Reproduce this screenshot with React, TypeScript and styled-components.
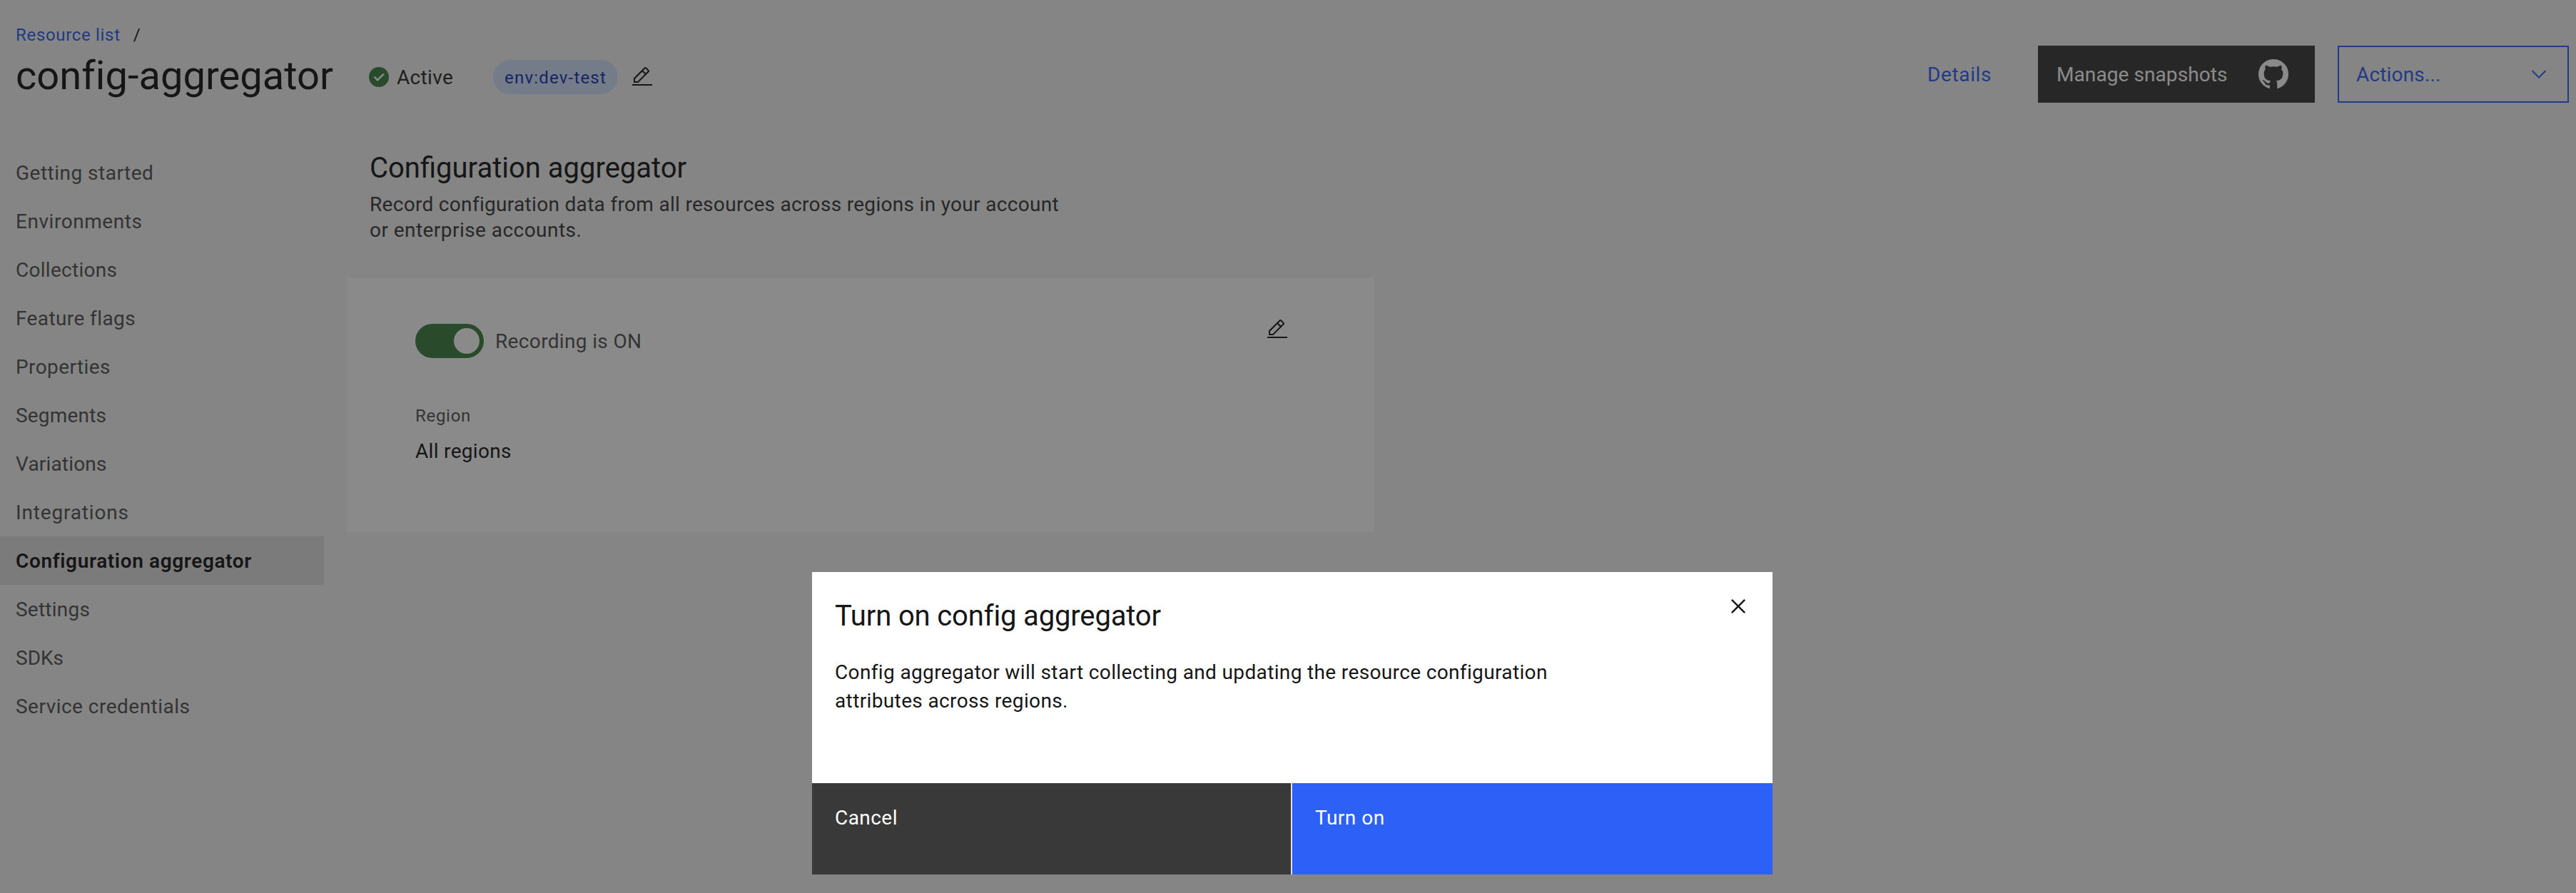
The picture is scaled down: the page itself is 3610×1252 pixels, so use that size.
import React from "react";
import styled, { createGlobalStyle } from "styled-components";

const color = {
  page: "#f4f4f4",
  layer: "#ffffff",
  selected: "#e0e0e0",
  text: "#161616",
  textStrong: "#393939",
  textSecondary: "#525252",
  blue: "#2d60f6",
  green: "#3e8040",
  dark: "#393939",
  tagBg: "#d3e1fd",
  tagText: "#1832b4",
};

const GlobalStyle = createGlobalStyle`
  *, *::before, *::after { box-sizing: border-box; }
  html, body { margin: 0; padding: 0; background: ${color.page}; overflow: hidden; }
  body { font-family: Roboto, "Noto Sans", sans-serif; font-size: 28px; color: ${color.text}; }
  h1, h2, p, ul { margin: 0; padding: 0; font-weight: 400; }
  button { font: inherit; border: 0; margin: 0; text-align: left; cursor: pointer; }
  svg { display: block; flex: none; }
`;

const Text = styled.span<{ $track?: number }>`
  letter-spacing: ${(p) => p.$track ?? 0.3}px;
  white-space: nowrap;
`;

const Page = styled.div`
  height: 1252px;
  background: ${color.page};
`;

const Header = styled.header`
  display: flex;
  justify-content: space-between;
  align-items: flex-start;
  height: 208px;
  padding: 33px 10px 0 22px;
`;

const Breadcrumb = styled.nav`
  display: flex;
  gap: 18px;
  font-size: 24px;
  line-height: 32px;
`;

const BreadcrumbLink = styled.a`
  color: ${color.blue};
`;

const TitleRow = styled.div`
  display: flex;
  align-items: center;
  height: 68px;
  margin-top: 9px;
`;

const Title = styled.h1`
  flex: 0 0 493px;
  padding-bottom: 4px;
  font-size: 56px;
  line-height: 64px;
`;

const Status = styled.div`
  display: flex;
  align-items: center;
  gap: 9px;
  width: 176px;
  line-height: 37px;
  color: #2b2b2b;
`;

const Tag = styled.span`
  width: 175px;
  height: 48px;
  margin-right: 18px;
  padding: 1px 0 0 16px;
  border-radius: 24px;
  background: ${color.tagBg};
  color: ${color.tagText};
  font-size: 24px;
  line-height: 48px;
`;

const HeaderActions = styled.div`
  display: flex;
  align-items: center;
  height: 80px;
  margin-top: 31px;
`;

const DetailsLink = styled.a`
  width: 156px;
  padding-left: 1px;
  color: ${color.blue};
`;

const HeaderButton = styled.button<{ $kind: "solid" | "outline" }>`
  display: flex;
  align-items: center;
  justify-content: space-between;
  height: 80px;
  width: ${(p) => (p.$kind === "solid" ? 388 : 324)}px;
  margin-left: ${(p) => (p.$kind === "solid" ? 0 : 32)}px;
  padding: ${(p) => (p.$kind === "solid" ? "0 34px 0 26px" : "0 24px 0 24px")};
  border: ${(p) => (p.$kind === "solid" ? "0" : `2px solid ${color.blue}`)};
  background: ${(p) => (p.$kind === "solid" ? color.dark : "transparent")};
  color: ${(p) => (p.$kind === "solid" ? "#ffffff" : color.blue)};
`;

const Body = styled.div`
  display: flex;
  align-items: flex-start;
  gap: 32px;
`;

const SideNav = styled.ul`
  width: 454px;
  list-style: none;
`;

const NavItem = styled.li<{ $active: boolean }>`
  height: 68px;
  padding: 1px 0 0 22px;
  line-height: 68px;
  font-weight: ${(p) => (p.$active ? 600 : 400)};
  color: ${(p) => (p.$active ? color.text : color.textSecondary)};
  background: ${(p) => (p.$active ? color.selected : "transparent")};
`;

const Main = styled.main`
  width: 1440px;
`;

const Intro = styled.section`
  padding: 2px 0 49px 32px;
`;

const Heading = styled.h2`
  font-size: 40px;
  line-height: 52px;
`;

const Description = styled.p`
  display: flex;
  flex-direction: column;
  margin-top: 7px;
  line-height: 36px;
  color: ${color.textStrong};
`;

const Card = styled.section`
  display: flex;
  justify-content: space-between;
  align-items: flex-start;
  height: 356px;
  padding: 56px 120px 0 96px;
  background: ${color.layer};
`;

const Fields = styled.div`
  display: flex;
  flex-direction: column;
  padding-top: 8px;
`;

const ToggleRow = styled.div`
  display: flex;
  align-items: center;
  gap: 16px;
  height: 48px;
  color: ${color.textSecondary};
`;

const Toggle = styled.span`
  display: flex;
  justify-content: flex-end;
  width: 96px;
  height: 48px;
  padding: 6px;
  border-radius: 24px;
  background: ${color.green};
`;

const Knob = styled.span`
  width: 36px;
  height: 36px;
  border-radius: 50%;
  background: #ffffff;
`;

const FieldLabel = styled.div`
  margin-top: 65px;
  font-size: 24px;
  line-height: 32px;
  color: ${color.textSecondary};
`;

const FieldValue = styled.div`
  margin-top: 14px;
  line-height: 40px;
`;

const Overlay = styled.div`
  position: fixed;
  inset: 0;
  display: flex;
  align-items: flex-start;
  padding: 802px 0 0 1138px;
  background: rgba(22, 22, 22, 0.5);
`;

const Dialog = styled.div`
  display: flex;
  flex-direction: column;
  width: 1346px;
  height: 424px;
  background: #ffffff;
`;

const DialogHeader = styled.div`
  display: flex;
  justify-content: space-between;
  align-items: flex-start;
  height: 88px;
  padding: 28px 28px 0 32px;
`;

const DialogTitle = styled.h2`
  padding-top: 8px;
  font-size: 40px;
  line-height: 52px;
`;

const DialogBody = styled.p`
  display: flex;
  flex: 1;
  flex-direction: column;
  padding: 33px 32px 0;
  line-height: 40px;
`;

const DialogFooter = styled.div`
  display: grid;
  grid-template-columns: 671px 673px;
  gap: 2px;
  height: 128px;
  background: #e0e0e0;
`;

const FooterButton = styled.button<{ $primary?: boolean }>`
  display: flex;
  align-items: flex-start;
  padding: 31px 32px 0;
  line-height: 36px;
  color: #ffffff;
  background: ${(p) => (p.$primary ? color.blue : color.dark)};
`;

const CheckIcon = () => (
  <svg width="32" height="32" viewBox="0 0 16 16" fill={color.green}>
    <path d="M8,1C4.1,1,1,4.1,1,8c0,3.9,3.1,7,7,7s7-3.1,7-7C15,4.1,11.9,1,8,1z" />
    <path fill="#ffffff" d="M7,11L4.3,8.3l0.9-0.8L7,9.3l4-3.9l0.9,0.8L7,11z" />
  </svg>
);

const EditIcon = () => (
  <svg width="32" height="32" viewBox="0 0 32 32" fill={color.text}>
    <path d="M2 26H30V28H2z" />
    <path d="M25.4,9c0.8-0.8,0.8-2,0-2.8l-3.6-3.6c-0.8-0.8-2-0.8-2.8,0l-15,15V24h6.4L25.4,9z M20.4,4L24,7.6l-3,3L17.4,7L20.4,4z M6,22v-3.6l10-10l3.6,3.6l-10,10H6z" />
  </svg>
);

const GithubIcon = () => (
  <svg width="48" height="48" viewBox="0 0 32 32" fill="currentColor">
    <path d="M16,2a14,14,0,0,0-4.43,27.28c.7.13,1-.3,1-.67s0-1.21,0-2.38c-3.89.84-4.71-1.88-4.71-1.88A3.71,3.71,0,0,0,6.24,22.3c-1.27-.86.1-.85.1-.85A2.94,2.94,0,0,1,8.48,22.9a3,3,0,0,0,4.08,1.16,2.93,2.93,0,0,1,.88-1.87c-3.1-.36-6.37-1.56-6.37-6.92a5.4,5.4,0,0,1,1.44-3.76,5,5,0,0,1,.14-3.7s1.17-.38,3.85,1.43a13.3,13.3,0,0,1,7,0c2.67-1.81,3.84-1.43,3.84-1.43a5,5,0,0,1,.14,3.7,5.4,5.4,0,0,1,1.44,3.76c0,5.38-3.27,6.56-6.39,6.91a3.33,3.33,0,0,1,.95,2.59c0,1.87,0,3.38,0,3.84s.25.81,1,.67A14,14,0,0,0,16,2Z" />
  </svg>
);

const ChevronIcon = () => (
  <svg width="32" height="32" viewBox="0 0 16 16" fill="currentColor">
    <path d="M8 11L3 6 3.7 5.3 8 9.6 12.3 5.3 13 6z" />
  </svg>
);

const CloseIcon = () => (
  <svg width="40" height="40" viewBox="0 0 32 32" fill={color.text}>
    <path d="M24 9.4L22.6 8 16 14.6 9.4 8 8 9.4 14.6 16 8 22.6 9.4 24 16 17.4 22.6 24 24 22.6 17.4 16 24 9.4z" />
  </svg>
);

const navItems: { label: string; track: number; active?: boolean }[] = [
  { label: "Getting started", track: 0.49 },
  { label: "Environments", track: 0.55 },
  { label: "Collections", track: 0.28 },
  { label: "Feature flags", track: 0.4 },
  { label: "Properties", track: 0.4 },
  { label: "Segments", track: 0.18 },
  { label: "Variations", track: 0.18 },
  { label: "Integrations", track: 0.83 },
  { label: "Configuration aggregator", track: 0.62, active: true },
  { label: "Settings", track: 0.24 },
  { label: "SDKs", track: 0 },
  { label: "Service credentials", track: 0.48 },
];

export default function App() {
  return (
    <>
      <GlobalStyle />
      <Page>
        <Header>
          <div>
            <Breadcrumb>
              <BreadcrumbLink>
                <Text $track={0.68}>Resource list</Text>
              </BreadcrumbLink>
              <span>/</span>
            </Breadcrumb>
            <TitleRow>
              <Title>
                <Text $track={0.05}>config-aggregator</Text>
              </Title>
              <Status>
                <CheckIcon />
                <Text $track={0.34}>Active</Text>
              </Status>
              <Tag>
                <Text $track={1.2}>env:dev-test</Text>
              </Tag>
              <EditIcon />
            </TitleRow>
          </div>
          <HeaderActions>
            <DetailsLink>
              <Text $track={0.63}>Details</Text>
            </DetailsLink>
            <HeaderButton $kind="solid">
              <Text $track={0.08}>Manage snapshots</Text>
              <GithubIcon />
            </HeaderButton>
            <HeaderButton $kind="outline">
              <Text $track={0.16}>Actions...</Text>
              <ChevronIcon />
            </HeaderButton>
          </HeaderActions>
        </Header>

        <Body>
          <SideNav>
            {navItems.map((item) => (
              <NavItem key={item.label} $active={!!item.active}>
                <Text $track={item.track}>{item.label}</Text>
              </NavItem>
            ))}
          </SideNav>
          <Main>
            <Intro>
              <Heading>
                <Text $track={0}>Configuration aggregator</Text>
              </Heading>
              <Description>
                <Text $track={0.31}>
                  Record configuration data from all resources across regions in your account
                </Text>
                <Text $track={0.45}>or enterprise accounts.</Text>
              </Description>
            </Intro>
            <Card>
              <Fields>
                <ToggleRow>
                  <Toggle>
                    <Knob />
                  </Toggle>
                  <Text $track={0.35}>Recording is ON</Text>
                </ToggleRow>
                <FieldLabel>
                  <Text $track={0.7}>Region</Text>
                </FieldLabel>
                <FieldValue>
                  <Text $track={0.32}>All regions</Text>
                </FieldValue>
              </Fields>
              <EditIcon />
            </Card>
          </Main>
        </Body>
      </Page>

      <Overlay>
        <Dialog role="dialog">
          <DialogHeader>
            <DialogTitle>
              <Text $track={-0.15}>Turn on config aggregator</Text>
            </DialogTitle>
            <CloseIcon />
          </DialogHeader>
          <DialogBody>
            <Text $track={0.36}>
              Config aggregator will start collecting and updating the resource configuration
            </Text>
            <Text $track={0.37}>attributes across regions.</Text>
          </DialogBody>
          <DialogFooter>
            <FooterButton>
              <Text $track={0.45}>Cancel</Text>
            </FooterButton>
            <FooterButton $primary>
              <Text $track={0.5}>Turn on</Text>
            </FooterButton>
          </DialogFooter>
        </Dialog>
      </Overlay>
    </>
  );
}
